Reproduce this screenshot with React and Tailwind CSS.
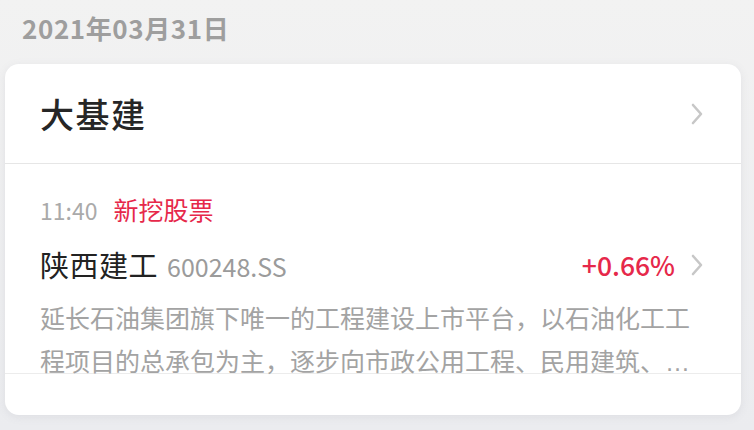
import React from "react";

const Chevron = ({ className = "" }) => (
  <svg width="14" height="22" viewBox="0 0 14 22" className={className} fill="none">
    <polyline points="3,2 11,11 3,20" stroke="#c7c7c7" strokeWidth="2.6" strokeLinecap="round" strokeLinejoin="round" />
  </svg>
);

const App = () => {
  return (
    <div
      className="w-[754px] h-[430px] overflow-hidden bg-gradient-to-b from-[#f2f2f2] to-[#ebecef]"
      style={{ fontFamily: '"Noto Sans CJK SC", "Noto Sans", sans-serif' }}
    >
      <div className="h-[64px] pl-[22px] pt-[11px]">
        <span className="text-[26px] leading-[34px] font-bold text-[#9e9e9e] tracking-[0.6px]">2021年03月31日</span>
      </div>

      <div className="ml-[5px] w-[736px] bg-white rounded-[14px] shadow-[0_2px_8px_rgba(120,125,140,0.12)]">
        <div className="h-[100px] flex items-center justify-between pl-[35px] pr-[37px] border-b border-[#e6e6e6]">
          <span className="text-[34px] font-medium text-[#262626] tracking-[1.5px]">大基建</span>
          <Chevron />
        </div>

        <div className="pl-[35px] pr-[37px] pt-[30px] border-b border-[#ececec]">
          <div className="flex items-center h-[32px] gap-[16px]">
            <span className="text-[23px] text-[#aaaaaa]">11:40</span>
            <span className="text-[25px] text-[#e6284a]">新挖股票</span>
          </div>

          <div className="flex items-center justify-between h-[40px] mt-[19px]">
            <div className="flex items-baseline gap-[9px]">
              <span className="text-[29px] text-[#222222] tracking-[0.5px]">陕西建工</span>
              <span className="text-[25px] text-[#9b9b9b]">600248.SS</span>
            </div>
            <div className="flex items-center gap-[15px]">
              <span className="text-[26.5px] font-medium text-[#e6284a]">+0.66%</span>
              <Chevron />
            </div>
          </div>

          <div className="mt-[10px] h-[78px] text-[25px] leading-[44px] text-[#a3a3a3] whitespace-nowrap">
            <div>延长石油集团旗下唯一的工程建设上市平台，以石油化工工</div>
            <div className="leading-[42px]">
              程项目的总承包为主，逐步向市政公用工程、民用建筑、
              <span className="font-['Liberation_Sans'] tracking-[1px]">…</span>
            </div>
          </div>
        </div>

        <div className="h-[41px]" />
      </div>
    </div>
  );
};

export default App;
